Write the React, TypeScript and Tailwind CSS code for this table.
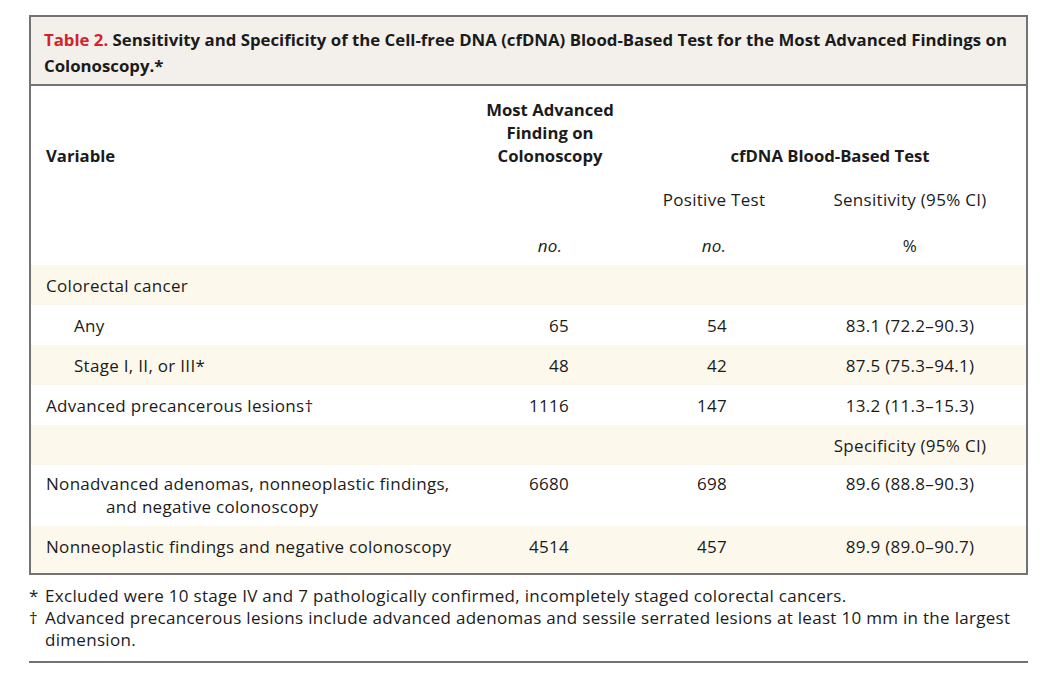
const cols = "grid grid-cols-[435px_168px_160px_232px]";

type Row = {
  label: string;
  indent?: boolean;
  a?: string;
  b?: string;
  c?: string;
  shaded?: boolean;
  wrap?: string;
};

const rows: Row[] = [
  { label: "Colorectal cancer", shaded: true },
  { label: "Any", indent: true, a: "65", b: "54", c: "83.1 (72.2–90.3)" },
  { label: "Stage I, II, or III*", indent: true, a: "48", b: "42", c: "87.5 (75.3–94.1)", shaded: true },
  { label: "Advanced precancerous lesions†", a: "1116", b: "147", c: "13.2 (11.3–15.3)" },
  { label: "", c: "Specificity (95% CI)", shaded: true },
  {
    label: "Nonadvanced adenomas, nonneoplastic findings,",
    wrap: "and negative colonoscopy",
    a: "6680",
    b: "698",
    c: "89.6 (88.8–90.3)",
  },
  { label: "Nonneoplastic findings and negative colonoscopy", a: "4514", b: "457", c: "89.9 (89.0–90.7)", shaded: true },
];

function DataRow({ row }: { row: Row }) {
  const tall = !!row.wrap;
  return (
    <div
      className={`${cols} ${row.shaded ? "bg-[#fcf8ec]" : "bg-white"} ${
        tall ? "h-[61px] pt-[7px]" : "h-[40px] items-center"
      }`}
    >
      <div className={row.indent ? "pl-[43px]" : "pl-[15px]"}>
        <div>{row.label}</div>
        {row.wrap && <div className="pl-[60px]">{row.wrap}</div>}
      </div>
      <div className="text-right pr-[65px]">{row.a}</div>
      <div className="text-right pr-[67px]">{row.b}</div>
      <div className="text-center">{row.c}</div>
    </div>
  );
}

export default function App() {
  return (
    <div className="min-h-screen bg-white pt-[15px] pl-[29px] text-[#1b1b1b] font-['Open_Sans','Liberation_Sans',sans-serif]">
      <div className="w-[999px]">
        {/* Table box */}
        <div className="border-2 border-[#737373]">
          <div className="bg-[#f3f0eb] border-b-2 border-[#737373] px-[13px] pt-[10px] pb-[5px] text-[16.8px] leading-[26px] font-bold">
            <span className="text-[#d2232a]">Table 2.</span> Sensitivity and Specificity of the Cell-free DNA (cfDNA)
            Blood-Based Test for the Most Advanced Findings on Colonoscopy.*
          </div>

          {/* Column headings */}
          <div className="text-[17px] leading-[23px] tracking-[0.3px]">
            <div className={`${cols} h-[81px] items-end font-bold text-[16.7px] tracking-normal`}>
              <div className="pl-[15px]">Variable</div>
              <div className="text-center">
                Most Advanced
                <br />
                Finding on
                <br />
                Colonoscopy
              </div>
              <div className="col-span-2 text-center">cfDNA Blood-Based Test</div>
            </div>
            <div className={`${cols} h-[55px] pt-[21px]`}>
              <div />
              <div />
              <div className="text-center">Positive Test</div>
              <div className="text-center">Sensitivity (95% CI)</div>
            </div>
            <div className={`${cols} h-[43px] pt-[12px]`}>
              <div />
              <div className="text-center italic">no.</div>
              <div className="text-center italic">no.</div>
              <div className="text-center">%</div>
            </div>

            {rows.map((r, i) => (
              <DataRow key={i} row={r} />
            ))}
            <div className="h-[7px] bg-[#fcf8ec]" />
          </div>
        </div>

        {/* Footnotes */}
        <div className="pt-[10px] pb-[10px] text-[17px] leading-[22px] tracking-[0.3px] border-b-2 border-[#737373]">
          <div className="flex">
            <span className="w-[16px] shrink-0">*</span>
            <span>Excluded were 10 stage IV and 7 pathologically confirmed, incompletely staged colorectal cancers.</span>
          </div>
          <div className="flex">
            <span className="w-[16px] shrink-0">†</span>
            <span>
              Advanced precancerous lesions include advanced adenomas and sessile serrated lesions at least 10 mm in the
              largest dimension.
            </span>
          </div>
        </div>
      </div>
    </div>
  );
}
